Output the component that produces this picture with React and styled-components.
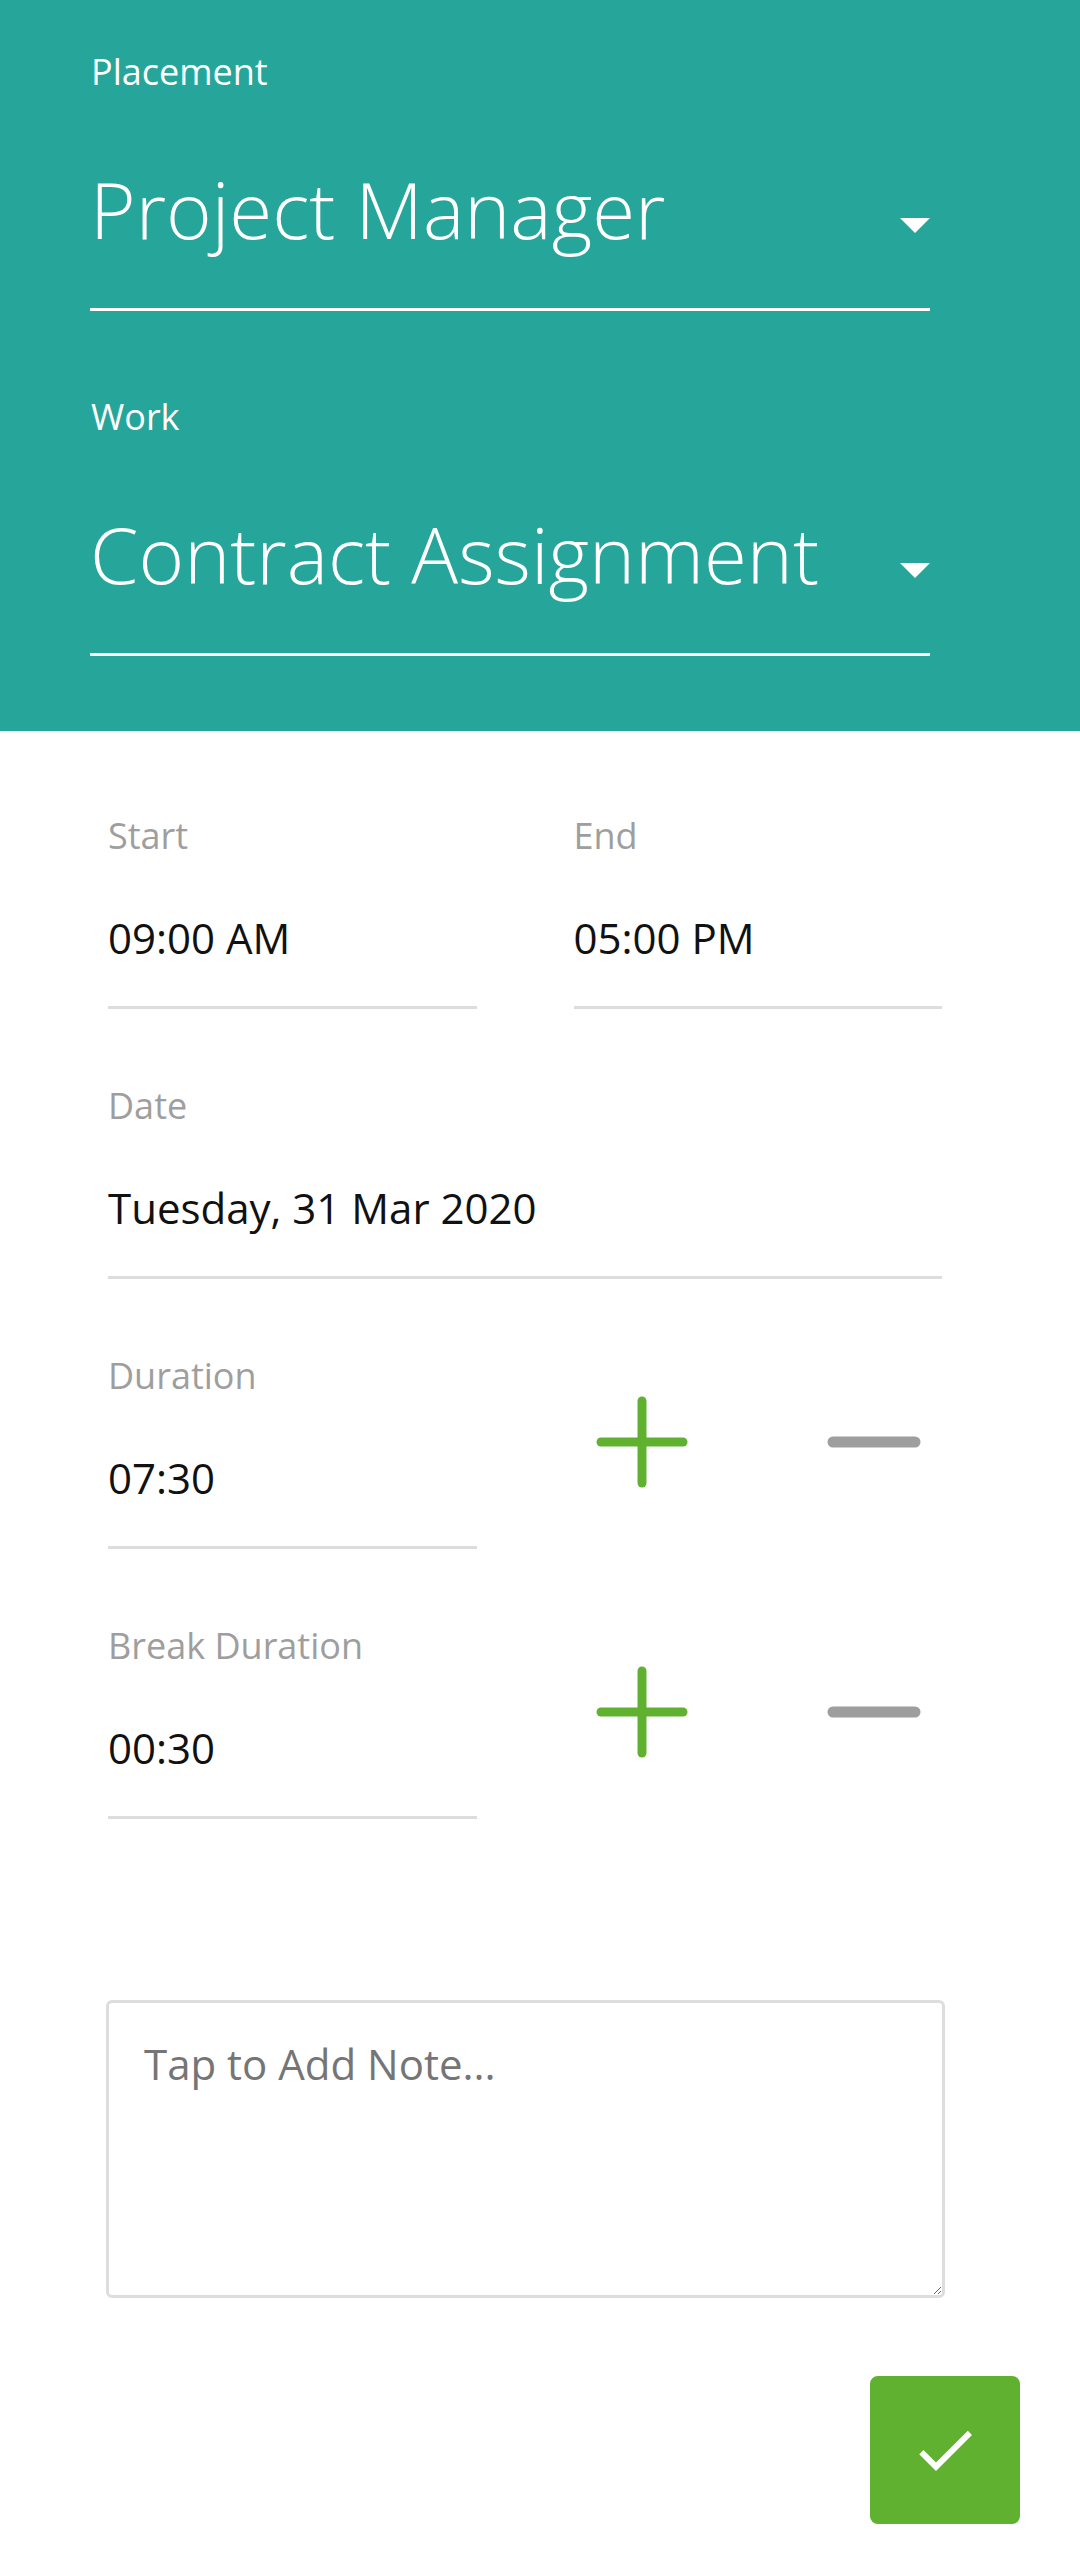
import React from "react";
import styled, { createGlobalStyle } from "styled-components";
import { MdCheck } from "react-icons/md";

const theme = {
  teal: "#26a69a",
  green: "#5fb12f",
  grey: "#9e9e9e",
  line: "#dddddd",
};

const GlobalStyle = createGlobalStyle`
  html, body {
    margin: 0;
    padding: 0;
    background: #ffffff;
  }
  body {
    font-family: "Open Sans", "Noto Sans", sans-serif;
  }
  * {
    box-sizing: border-box;
  }
`;

const Page = styled.div`
  width: 1080px;
  min-height: 2555px;
  background: #ffffff;
`;

const Header = styled.header`
  background: ${theme.teal};
  padding: 49px 150px 75px 90px;
`;

const SelectField = styled.div`
  padding-bottom: 43px;
  border-bottom: 3px solid #ffffff;
  & + & {
    margin-top: 83px;
  }
`;

const SelectLabel = styled.div`
  color: #ffffff;
  font-size: 36px;
  line-height: 46px;
  padding-left: 1px;
`;

const SelectRow = styled.div`
  margin-top: 58px;
  display: flex;
  align-items: center;
  justify-content: space-between;
  height: 112px;
`;

const SelectValue = styled.div`
  color: #ffffff;
  font-size: 78px;
  font-weight: 300;
  line-height: 112px;
  white-space: nowrap;
`;

const Caret = styled.span`
  width: 0;
  height: 0;
  margin-top: 32px;
  border-left: 15px solid transparent;
  border-right: 15px solid transparent;
  border-top: 15px solid #ffffff;
`;

const Body = styled.main`
  padding: 82px 138px 32px 108px;
`;

const Row = styled.div`
  display: grid;
  grid-template-columns: 1fr 1fr;
  column-gap: 97px;
  margin-top: ${p => p.gap || 0}px;
`;

const Field = styled.div`
  grid-column: ${p => (p.wide ? "1 / span 2" : "auto")};
  padding-bottom: 40px;
  border-bottom: 3px solid ${theme.line};
  margin-top: ${p => p.gap || 0}px;
`;

const Label = styled.div`
  color: ${theme.grey};
  font-size: 36px;
  line-height: 46px;
`;

const Value = styled.div`
  margin-top: 51px;
  color: #111111;
  font-size: 42px;
  line-height: 56px;
`;

const Steppers = styled.div`
  display: flex;
  justify-content: space-between;
  align-items: center;
  padding-bottom: 18px;
`;

const StepButton = styled.button`
  width: 136px;
  height: 100px;
  padding: 0;
  border: 0;
  background: transparent;
  display: flex;
  align-items: center;
  justify-content: center;
  cursor: pointer;
`;

const NoteBox = styled.textarea`
  display: block;
  width: 839px;
  height: 298px;
  margin: 181px 0 0 -2px;
  padding: 33px 35px;
  border: 3px solid ${theme.line};
  border-radius: 6px;
  font-family: "Open Sans", "Noto Sans", sans-serif;
  font-size: 42px;
  line-height: 56px;
  color: #222222;
  outline: none;
  &::placeholder {
    color: #757575;
  }
`;

const Actions = styled.div`
  display: flex;
  justify-content: flex-end;
  margin-top: 78px;
  margin-right: -78px;
`;

const SaveButton = styled.button`
  width: 150px;
  height: 148px;
  border: 0;
  border-radius: 8px;
  background: ${theme.green};
  color: #ffffff;
  display: flex;
  align-items: center;
  justify-content: center;
  padding: 0;
  cursor: pointer;
`;

const PlusIcon = () => (
  <svg width="92" height="92" viewBox="0 0 92 92">
    <g stroke={theme.green} strokeWidth="9" strokeLinecap="round">
      <line x1="5" y1="46" x2="87" y2="46" />
      <line x1="46" y1="5" x2="46" y2="87" />
    </g>
  </svg>
);

const MinusIcon = () => (
  <svg width="94" height="20" viewBox="0 0 94 20">
    <line x1="6" y1="10" x2="88" y2="10" stroke={theme.grey} strokeWidth="11" strokeLinecap="round" />
  </svg>
);

const selects = [
  { label: "Placement", value: "Project Manager" },
  { label: "Work", value: "Contract Assignment" },
];

const counters = [
  { label: "Duration", value: "07:30" },
  { label: "Break Duration", value: "00:30" },
];

const App = () => {
  return (
    <Page>
      <GlobalStyle />
      <Header>
        {selects.map(({ label, value }) => (
          <SelectField key={label}>
            <SelectLabel>{label}</SelectLabel>
            <SelectRow>
              <SelectValue>{value}</SelectValue>
              <Caret />
            </SelectRow>
          </SelectField>
        ))}
      </Header>
      <Body>
        <Row>
          <Field>
            <Label>Start</Label>
            <Value>09:00 AM</Value>
          </Field>
          <Field>
            <Label>End</Label>
            <Value>05:00 PM</Value>
          </Field>
        </Row>
        <Row>
          <Field wide gap={74}>
            <Label>Date</Label>
            <Value>Tuesday, 31 Mar 2020</Value>
          </Field>
        </Row>
        {counters.map(({ label, value }) => (
          <Row key={label} gap={74}>
            <Field>
              <Label>{label}</Label>
              <Value>{value}</Value>
            </Field>
            <Steppers>
              <StepButton aria-label="Add">
                <PlusIcon />
              </StepButton>
              <StepButton aria-label="Subtract">
                <MinusIcon />
              </StepButton>
            </Steppers>
          </Row>
        ))}
        <NoteBox placeholder="Tap to Add Note..." />
        <Actions>
          <SaveButton aria-label="Save">
            <MdCheck size={72} />
          </SaveButton>
        </Actions>
      </Body>
    </Page>
  );
};

export default App;
